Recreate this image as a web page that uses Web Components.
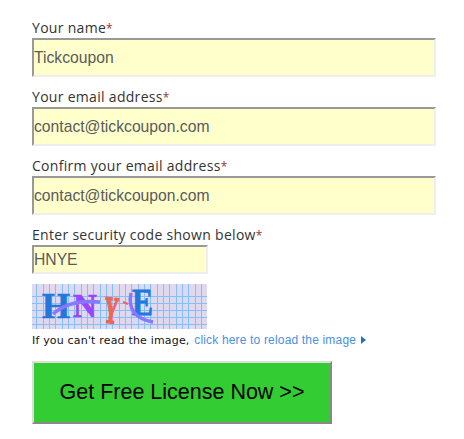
<!DOCTYPE html>
<html>
<head>
<meta charset="utf-8">
<title>Get Free License</title>
<style>
  html, body { margin: 0; background: #fff; }
</style>
</head>
<body>
<license-form>
  <form-field label="Your name" value="Tickcoupon"></form-field>
  <form-field label="Your email address" value="contact@tickcoupon.com"></form-field>
  <form-field label="Confirm your email address" value="contact@tickcoupon.com"></form-field>
  <form-field label="Enter security code shown below" value="HNYE" short></form-field>
  <captcha-image></captcha-image>
  <reload-note></reload-note>
  <submit-button>Get Free License Now &gt;&gt;</submit-button>
</license-form>

<script>
class LicenseForm extends HTMLElement {
  constructor() {
    super();
    this.attachShadow({ mode: 'open' });
    this.shadowRoot.innerHTML = `
      <style>
        :host {
          display: flex;
          flex-direction: column;
          align-items: flex-start;
          padding: 19px 0 0 32px;
        }
      </style>
      <slot></slot>`;
  }
}

class FormField extends HTMLElement {
  constructor() {
    super();
    this.attachShadow({ mode: 'open' });
    this.shadowRoot.innerHTML = `
      <style>
        :host {
          display: block;
          height: 69px;
        }
        label {
          display: block;
          height: 19px;
          font: 14px/17px "Open Sans", sans-serif;
          letter-spacing: .3px;
          color: #333;
        }
        .req { color: #933; font-size: 12px; }
        .box {
          box-sizing: border-box;
          display: flex;
          align-items: center;
          width: 404px;
          height: 39px;
          padding-top: 1px;
          border: 2px solid;
          border-color: #999 #eee #eee #999;
          background: #ffc;
          font: 15.7px "Liberation Sans", sans-serif;
          color: #5a5a5a;
        }
        :host([short]) { height: 58px; }
        :host([short]) .box { width: 176px; height: 29px; }
      </style>
      <label><span class="text"></span><span class="req">*</span></label>
      <div class="box"></div>`;
  }

  connectedCallback() {
    this.shadowRoot.querySelector('.text').textContent = this.getAttribute('label');
    this.shadowRoot.querySelector('.box').textContent = this.getAttribute('value');
  }
}

class CaptchaImage extends HTMLElement {
  constructor() {
    super();
    this.attachShadow({ mode: 'open' });
    let grid = '';
    for (let x = 4.4; x < 175; x += 6.33) grid += `M${Math.round(x) + 0.5} 0V45`;
    for (let y = 12.5; y < 45; y += 7) grid += `M0 ${y}H175`;
    this.shadowRoot.innerHTML = `
      <style>
        :host { display: block; width: 175px; height: 45px; }
        svg { display: block; overflow: visible; }
        text { font-family: "Liberation Serif", serif; font-weight: bold; }
      </style>
      <svg width="175" height="45" viewBox="0 0 175 45">
        <rect width="175" height="45" fill="#e0d8ee"/>
        <path d="${grid}" stroke="#7fc0ff" stroke-width="1" fill="none"/>
        <text transform="translate(10 34) scale(1.2 1.2)" font-size="30" fill="#2277dd" stroke="#2277dd" stroke-width=".6">H</text>
        <text transform="translate(41 33) scale(1.1 1.15)" font-size="30" fill="#9944ff" stroke="#9944ff" stroke-width=".6">N</text>
        <text transform="translate(71 38) rotate(6) scale(.65 1.25)" font-size="30" fill="#ee6655" stroke="#ee6655" stroke-width="1.6">Y</text>
        <text transform="translate(100 31) scale(1.05 1.25)" font-size="30" fill="#2277dd" stroke="#2277dd" stroke-width=".6">E</text>
        <path d="M91 18L96 20" stroke="#ee6655" stroke-width="2" fill="none"/>
        <path d="M21 30Q38 15 68 18" stroke="#8877ff" stroke-width="3.5" fill="none"/>
        <path d="M99 9Q94 33 121 38" stroke="#8877ff" stroke-width="3.5" fill="none"/>
      </svg>`;
  }
}

class ReloadNote extends HTMLElement {
  constructor() {
    super();
    this.attachShadow({ mode: 'open' });
    this.shadowRoot.innerHTML = `
      <style>
        :host {
          display: flex;
          align-items: center;
          height: 22px;
          margin-bottom: 10px;
          font: 11px "DejaVu Sans", sans-serif;
          letter-spacing: .18px;
          color: #111;
          white-space: pre;
        }
        a {
          margin-left: 1px;
          font: 12px "Liberation Sans", sans-serif;
          letter-spacing: .17px;
          color: #4a90e2;
          text-decoration: none;
        }
        svg { margin-left: 5px; }
      </style>
      <span>If you can't read the image, </span><a href="#">click here to reload the image</a>
      <svg width="5" height="8" viewBox="0 0 5 8"><path d="M0 0L5 4L0 8Z" fill="#1a75c4"/></svg>`;
  }
}

class SubmitButton extends HTMLElement {
  constructor() {
    super();
    this.attachShadow({ mode: 'open' });
    this.shadowRoot.innerHTML = `
      <style>
        :host { display: block; }
        button {
          display: block;
          box-sizing: border-box;
          width: 300px;
          height: 63px;
          padding: 0;
          border: 2px solid;
          border-color: #ddd #888 #888 #ddd;
          background: #3c3;
          font: 21.5px "Liberation Sans", sans-serif;
          color: #000;
        }
      </style>
      <button type="button"><slot></slot></button>`;
  }
}

customElements.define('license-form', LicenseForm);
customElements.define('form-field', FormField);
customElements.define('captcha-image', CaptchaImage);
customElements.define('reload-note', ReloadNote);
customElements.define('submit-button', SubmitButton);
</script>
</body>
</html>
